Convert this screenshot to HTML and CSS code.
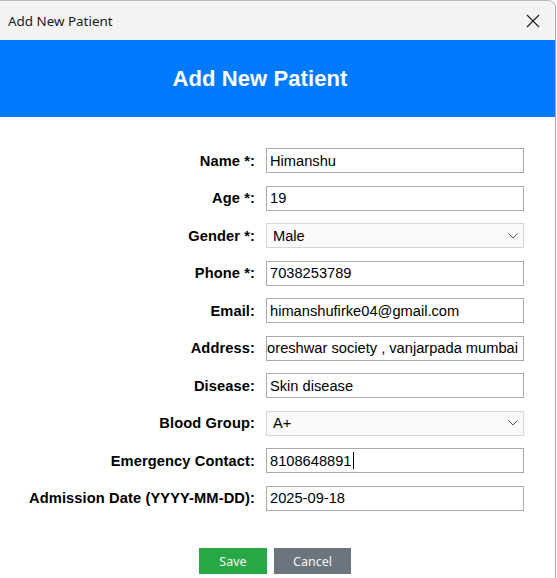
FILE: index.html
```html
<!DOCTYPE html>
<html>
<head>
<meta charset="utf-8">
<link rel="stylesheet" href="styles.css">
</head>
<body>
<div class="window">
  <div class="titlebar">
    <span class="title">Add New Patient</span>
    <svg class="close" width="14" height="14" viewBox="0 0 14 14"><path d="M1 1 L13 13 M13 1 L1 13" stroke="#1a1a1a" stroke-width="1.1" fill="none"/></svg>
  </div>
  <div class="header"><h1>Add New Patient</h1></div>
  <div class="form">
    <label>Name *:</label><div class="field"><span>Himanshu</span></div>
    <label>Age *:</label><div class="field"><span>19</span></div>
    <label>Gender *:</label><div class="field select"><span>Male</span><svg width="10" height="6" viewBox="0 0 10 6"><path d="M0.5 0.5 L5 5 L9.5 0.5" stroke="#555" stroke-width="1" fill="none"/></svg></div>
    <label>Phone *:</label><div class="field"><span>7038253789</span></div>
    <label>Email:</label><div class="field"><span>himanshufirke04@gmail.com</span></div>
    <label>Address:</label><div class="field scrolled"><span>oreshwar society , vanjarpada mumbai</span></div>
    <label>Disease:</label><div class="field"><span>Skin disease</span></div>
    <label>Blood Group:</label><div class="field select"><span>A+</span><svg width="10" height="6" viewBox="0 0 10 6"><path d="M0.5 0.5 L5 5 L9.5 0.5" stroke="#555" stroke-width="1" fill="none"/></svg></div>
    <label>Emergency Contact:</label><div class="field"><span>8108648891</span><i class="caret"></i></div>
    <label>Admission Date (YYYY-MM-DD):</label><div class="field"><span>2025-09-18</span></div>
  </div>
  <div class="buttons">
    <button class="btn save">Save</button>
    <button class="btn cancel">Cancel</button>
  </div>
</div>
</body>
</html>
```
FILE: styles.css
```css
html, body {
  margin: 0;
  padding: 0;
  background: #ffffff;
  height: 578px;
  overflow: hidden;
}
.window {
  width: 555px;
  height: 600px;
  border-top: 1px solid #b8b8b8;
  border-right: 1px solid #a8a8a8;
  border-top-right-radius: 8px;
  background: #ffffff;
  overflow: hidden;
}
.titlebar {
  height: 39px;
  background: #f3f3f3;
  display: flex;
  align-items: center;
  justify-content: space-between;
  padding: 0 15px 0 8px;
}
.title {
  font-family: "Noto Sans", "Open Sans", sans-serif;
  font-size: 13.4px;
  color: #1a1a1a;
  margin-top: 1px;
}
.close {
  display: block;
}
.header {
  background: #007bff;
  height: 77px;
  display: flex;
  align-items: center;
  justify-content: center;
  padding-right: 35px;
}
.header h1 {
  margin: 0;
  font-family: "Liberation Sans", Arial, sans-serif;
  font-weight: bold;
  font-size: 22px;
  color: #ffffff;
  letter-spacing: 0.1px;
}
.form {
  display: grid;
  grid-template-columns: 255px 258px;
  column-gap: 11px;
  row-gap: 12.5px;
  padding-top: 31px;
  align-items: center;
}
.form label {
  text-align: right;
  font-family: "Liberation Sans", Arial, sans-serif;
  font-weight: bold;
  font-size: 14.67px;
  letter-spacing: 0.1px;
  color: #000;
}
.field {
  height: 25px;
  box-sizing: border-box;
  border: 1px solid #a9a9a9;
  background: #fff;
  display: flex;
  align-items: center;
  padding: 0 3px;
  font-family: "Liberation Sans", Arial, sans-serif;
  font-size: 14.67px;
  color: #000;
  overflow: hidden;
  white-space: nowrap;
}
.field span {
  flex: none;
}
.select {
  background: #fafafa;
  border-color: #d6d6d6;
  justify-content: space-between;
  padding: 0 5px 0 6px;
}
.select svg {
  flex: none;
}
.scrolled {
  justify-content: flex-end;
  padding-right: 5px;
}
.caret {
  display: block;
  width: 1px;
  height: 17px;
  background: #000;
  margin-left: 1px;
}
.buttons {
  display: flex;
  justify-content: center;
  gap: 7px;
  padding-top: 37px;
  padding-right: 5px;
}
.btn {
  border: none;
  height: 26px;
  font-family: "Noto Sans", "Open Sans", sans-serif;
  font-size: 12.5px;
  color: #f4f4f4;
  padding: 2px 0 0;
}
.save {
  width: 68px;
  background: #28a745;
}
.cancel {
  width: 77px;
  background: #6c757d;
}
```
